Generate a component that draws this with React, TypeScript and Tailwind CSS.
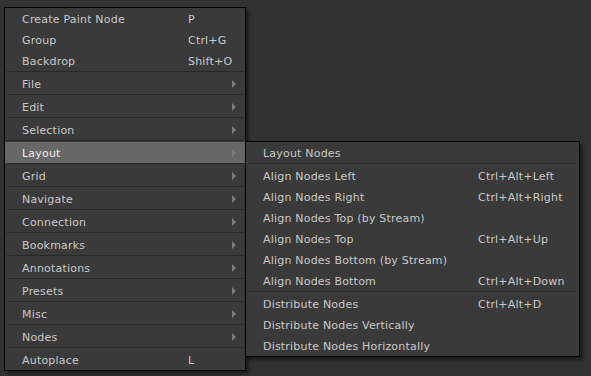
type Item = { label: string; shortcut?: string; sub?: boolean; sep?: boolean; active?: boolean };

const mainItems: Item[] = [
  { label: 'Create Paint Node', shortcut: 'P' },
  { label: 'Group', shortcut: 'Ctrl+G' },
  { label: 'Backdrop', shortcut: 'Shift+O' },
  { label: 'File', sub: true, sep: true },
  { label: 'Edit', sub: true, sep: true },
  { label: 'Selection', sub: true, sep: true },
  { label: 'Layout', sub: true, sep: true, active: true },
  { label: 'Grid', sub: true, sep: true },
  { label: 'Navigate', sub: true, sep: true },
  { label: 'Connection', sub: true, sep: true },
  { label: 'Bookmarks', sub: true, sep: true },
  { label: 'Annotations', sub: true, sep: true },
  { label: 'Presets', sub: true, sep: true },
  { label: 'Misc', sub: true, sep: true },
  { label: 'Nodes', sub: true, sep: true },
  { label: 'Autoplace', shortcut: 'L', sep: true },
];

const layoutItems: Item[] = [
  { label: 'Layout Nodes' },
  { label: 'Align Nodes Left', shortcut: 'Ctrl+Alt+Left', sep: true },
  { label: 'Align Nodes Right', shortcut: 'Ctrl+Alt+Right' },
  { label: 'Align Nodes Top (by Stream)' },
  { label: 'Align Nodes Top', shortcut: 'Ctrl+Alt+Up' },
  { label: 'Align Nodes Bottom (by Stream)' },
  { label: 'Align Nodes Bottom', shortcut: 'Ctrl+Alt+Down' },
  { label: 'Distribute Nodes', shortcut: 'Ctrl+Alt+D', sep: true },
  { label: 'Distribute Nodes Vertically' },
  { label: 'Distribute Nodes Horizontally' },
];

function Arrow() {
  return (
    <svg width="5" height="8" viewBox="0 0 5 8" className="absolute left-[227px] top-[7px]">
      <path d="M0 0 L4 4 L0 8 Z" fill="#7c7c7c" />
    </svg>
  );
}

function MainRow({ item }: { item: Item }) {
  return (
    <>
      {item.sep && (
        <div className="h-[2px] px-[2px]">
          <div className="h-px bg-[#272727]" />
        </div>
      )}
      <div
        className={
          'relative flex h-[21px] items-start leading-[23px] ' +
          (item.active ? 'bg-[#676767] text-[#ececec]' : 'text-[#c9c9c9]')
        }
      >
        <span className="w-[183px] pl-[17px]">{item.label}</span>
        {item.shortcut && <span>{item.shortcut}</span>}
        {item.sub && <Arrow />}
      </div>
    </>
  );
}

function SubRow({ item }: { item: Item }) {
  return (
    <>
      {item.sep && (
        <div className="h-[2px] pl-[2px] pr-[4px]">
          <div className="h-px bg-[#272727]" />
        </div>
      )}
      <div className="flex h-[21px] items-start leading-[23px] text-[#c9c9c9]">
        <span className="w-[232px] pl-[17px]">{item.label}</span>
        {item.shortcut && <span>{item.shortcut}</span>}
      </div>
    </>
  );
}

export default function App() {
  return (
    <div
      className="relative h-[376px] w-[591px] overflow-hidden bg-[#323232] text-[11px] tracking-[0.2px]"
      style={{ fontFamily: '"DejaVu Sans", Verdana, sans-serif' }}
    >
      <div className="absolute left-[4px] top-[7px] w-[242px] border border-black bg-[#3a3a3a] shadow-[3px_3px_3px_rgba(0,0,0,0.45)]">
        {mainItems.map((it) => (
          <MainRow key={it.label} item={it} />
        ))}
      </div>
      <div className="absolute left-[245px] top-[141px] w-[335px] border border-black bg-[#3a3a3a] shadow-[3px_3px_3px_rgba(0,0,0,0.45)]">
        {layoutItems.map((it) => (
          <SubRow key={it.label} item={it} />
        ))}
      </div>
    </div>
  );
}
